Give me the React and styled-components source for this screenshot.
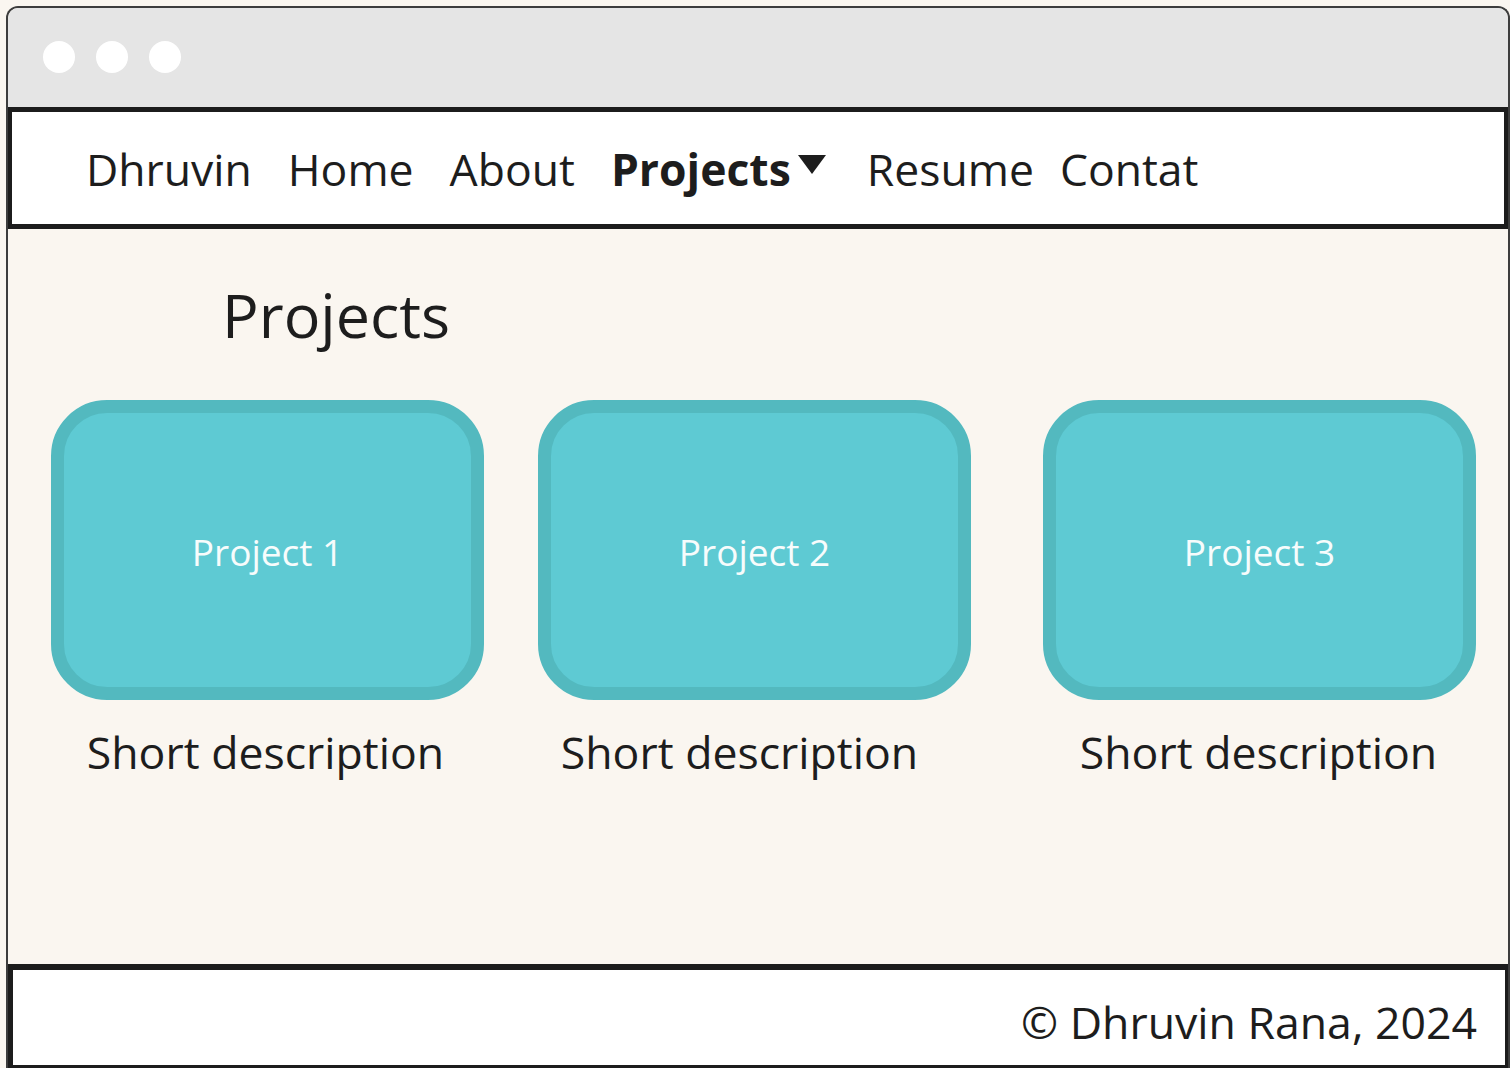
import styled, { createGlobalStyle } from "styled-components";

const GlobalStyle = createGlobalStyle`
  html, body {
    margin: 0;
    padding: 0;
    background: #faf6f0;
  }
  body {
    font-family: "Open Sans", "Noto Sans", sans-serif;
    color: #1d1d1d;
  }
`;

const Window = styled.div`
  box-sizing: border-box;
  margin: 6px 0 0 6px;
  width: 1504px;
  height: 1062px;
  border: 2px solid #3d3d3d;
  border-bottom: none;
  border-radius: 12px 12px 0 0;
  overflow: hidden;
  display: flex;
  flex-direction: column;
  background: #faf6f0;
`;

const TitleBar = styled.div`
  height: 99px;
  background: #e5e5e5;
  display: flex;
  align-items: center;
  gap: 21px;
  padding-left: 35px;
  padding-bottom: 2px;
  box-sizing: border-box;
`;

const Dot = styled.span`
  width: 32px;
  height: 32px;
  border-radius: 50%;
  background: #ffffff;
`;

const Nav = styled.nav`
  box-sizing: border-box;
  height: 122px;
  background: #ffffff;
  border: 5px solid #1c1c1c;
  border-left-width: 4px;
  border-right-width: 4px;
  display: flex;
  align-items: center;
  gap: 36px;
  padding-left: 74px;
`;

const NavItem = styled.a`
  font-size: 44.5px;
  font-weight: ${(p) => (p.$active ? 700 : 400)};
  color: #1d1d1d;
  text-decoration: none;
  display: flex;
  align-items: center;
  margin-left: ${(p) => (p.$tight ? "-10px" : "0")};
`;

const Caret = styled.svg`
  width: 30px;
  height: 20px;
  margin: -6px 4px 0 6px;
`;

const Main = styled.main`
  flex: 1;
  padding: 46px 32px 0 43px;
`;

const Heading = styled.h1`
  margin: 0 0 45px 171px;
  font-size: 61px;
  font-weight: 400;
  line-height: 80px;
  color: #1d1d1d;
`;

const CardGrid = styled.div`
  display: grid;
  grid-template-columns: 487px 505px 433px;
`;

const CardColumn = styled.div`
  width: 433px;
  display: flex;
  flex-direction: column;
  align-items: center;
`;

const Card = styled.div`
  box-sizing: border-box;
  width: 433px;
  height: 300px;
  background: #5ecad3;
  border: 13px solid #53b9bf;
  border-radius: 56px;
  display: flex;
  align-items: center;
  justify-content: center;
  color: #f7fcfc;
  font-size: 37px;
  padding-top: 2px;
`;

const Description = styled.p`
  margin: 20px 0 0;
  font-size: 44.6px;
  line-height: 64px;
  color: #1d1d1d;
  transform: translateX(${(p) => p.$shift || 0}px);
`;

const Footer = styled.footer`
  box-sizing: border-box;
  height: 104px;
  background: #ffffff;
  border: 6px solid #1c1c1c;
  border-left-width: 5px;
  border-right-width: 3px;
  border-bottom-width: 3px;
  display: flex;
  align-items: center;
  justify-content: flex-end;
  padding: 8px 28px 0 0;
  font-size: 44.6px;
  color: #1d1d1d;
`;

const projects = [
  { name: "Project 1", shift: -2 },
  { name: "Project 2", shift: -15 },
  { name: "Project 3", shift: -1 },
];

const navLinks = ["Dhruvin", "Home", "About", "Projects", "Resume", "Contat"];

const App = () => {
  return (
    <>
      <GlobalStyle />
      <Window>
        <TitleBar>
          <Dot />
          <Dot />
          <Dot />
        </TitleBar>
        <Nav>
          {navLinks.map((link) =>
            link === "Projects" ? (
              <NavItem key={link} $active>
                {link}
                <Caret viewBox="0 0 30 20">
                  <polygon points="1,0 29,0 15,19" fill="#1d1d1d" />
                </Caret>
              </NavItem>
            ) : (
              <NavItem key={link} $tight={link === "Contat"}>
                {link}
              </NavItem>
            )
          )}
        </Nav>
        <Main>
          <Heading>Projects</Heading>
          <CardGrid>
            {projects.map((p) => (
              <CardColumn key={p.name}>
                <Card>{p.name}</Card>
                <Description $shift={p.shift}>Short description</Description>
              </CardColumn>
            ))}
          </CardGrid>
        </Main>
        <Footer>© Dhruvin Rana, 2024</Footer>
      </Window>
    </>
  );
};

export default App;
